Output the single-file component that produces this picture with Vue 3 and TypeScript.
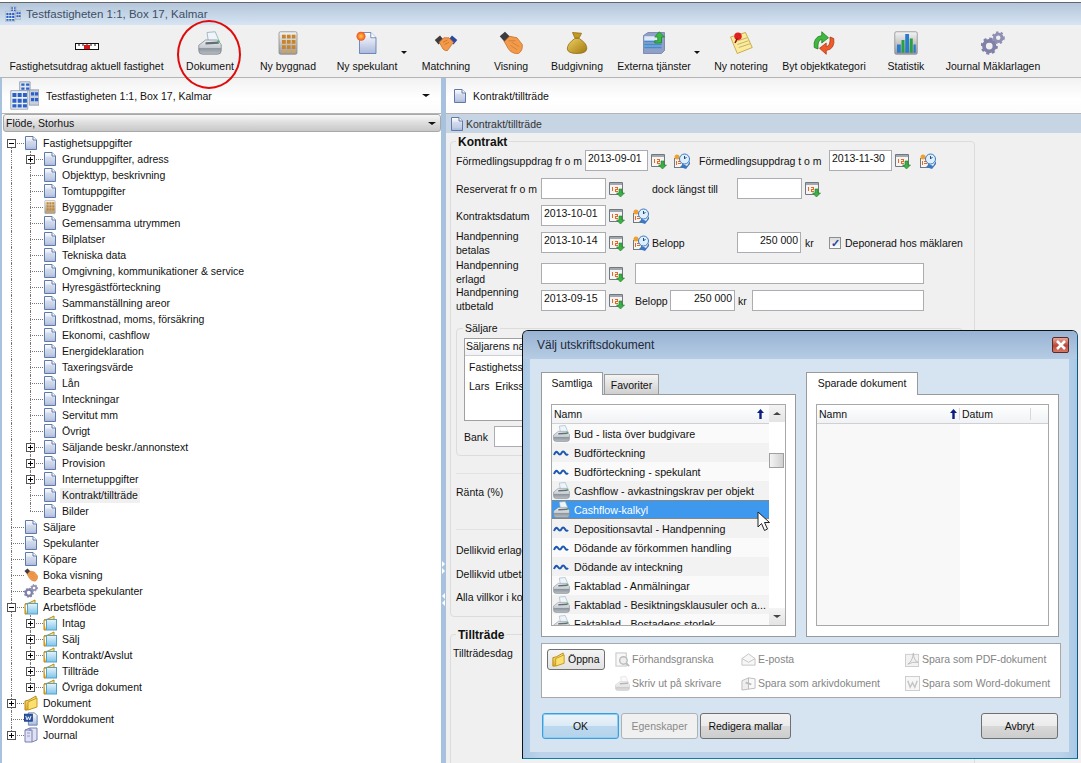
<template>
  <div class="window">
    <!-- ikoner -->
    <svg class="sprite" width="0" height="0">
      <defs>
        <linearGradient id="gDoc" x1="0" y1="0" x2="0" y2="1"><stop offset="0" stop-color="#fff" /><stop offset="1" stop-color="#aab8dc" /></linearGradient>
        <linearGradient id="gGray" x1="0" y1="0" x2="0" y2="1"><stop offset="0" stop-color="#f4f4f4" /><stop offset="1" stop-color="#9a9a9a" /></linearGradient>
        <linearGradient id="gPrint" x1="0" y1="0" x2="0" y2="1"><stop offset="0" stop-color="#eef0f2" /><stop offset=".55" stop-color="#c4cad0" /><stop offset=".6" stop-color="#8f979e" /><stop offset="1" stop-color="#b8bec4" /></linearGradient>
        <linearGradient id="gGold" x1="0" y1="0" x2="1" y2="1"><stop offset="0" stop-color="#f0d060" /><stop offset="1" stop-color="#a07810" /></linearGradient>
        <linearGradient id="gFolder" x1="0" y1="0" x2="0" y2="1"><stop offset="0" stop-color="#fff08a" /><stop offset="1" stop-color="#e0a820" /></linearGradient>
        <linearGradient id="gBlue" x1="0" y1="0" x2="0" y2="1"><stop offset="0" stop-color="#e6f4fc" /><stop offset="1" stop-color="#7fc4ea" /></linearGradient>
        <radialGradient id="gSun"><stop offset="0" stop-color="#ffd040" /><stop offset="1" stop-color="#f05020" /></radialGradient>
      </defs>
      <symbol id="i-doc" viewBox="0 0 12 14">
        <path d="M.5.5H8L11.5 4V13.5H.5Z" fill="url(#gDoc)" stroke="#5f7aa8" />
        <path d="M8 .5V4H11.5" fill="#fff" stroke="#5f7aa8" />
        <path d="M2 6H10M2 8H10M2 10H10" stroke="#c6d0e6" />
      </symbol>
      <symbol id="i-printer" viewBox="0 0 32 32">
        <path d="M12 2L23 1L28 13L14 15Z" fill="#eef6fb" stroke="#8fa6b8" />
        <path d="M1 19L10 12H26L31 18V26Q31 31 26 31H6Q1 31 1 26Z" fill="url(#gPrint)" stroke="#7c868e" />
        <path d="M10 15L27 14L28 17L10 18Z" fill="#626d76" />
        <rect x="26" y="13" width="3" height="2" fill="#30c040" />
      </symbol>
      <symbol id="i-build" viewBox="0 0 32 32">
        <rect x="4" y="1" width="24" height="30" rx="2" fill="url(#gGray)" stroke="#8a8a80" />
        <path d="M8 5h5v5H8zM14.500 5h5v5h-5zM21 5h5v5h-5zM8 12h5v5H8zM14.500 12h5v5h-5zM21 12h5v5h-5zM8 19h5v5H8zM14.500 19h5v5h-5zM21 19h5v5h-5z" fill="#c88428" />
        <path d="M8 26h5v3H8zM14.500 26h5v3h-5zM21 26h5v3h-5z" fill="#d8a050" />
      </symbol>
      <symbol id="i-newdoc" viewBox="0 0 32 32">
        <path d="M6 2H21L28 9V30H6Z" fill="url(#gDoc)" stroke="#4f6fa8" />
        <path d="M21 2V9H28" fill="#fff" stroke="#4f6fa8" />
        <circle cx="8" cy="7" r="6" fill="url(#gSun)" />
      </symbol>
      <symbol id="i-shake" viewBox="0 0 32 32">
        <path d="M1 12L8 6L13 12L6 18Z" fill="#3c3c40" />
        <path d="M31 12L24 6L19 12L26 18Z" fill="#2a4aa0" />
        <path d="M7 15L13 9H20L26 15L18 26Q15 27 12 24Z" fill="#f29a4c" stroke="#c86a20" />
        <path d="M12 15L18 12M14 18L20 15" stroke="#c86a20" />
      </symbol>
      <symbol id="i-hand" viewBox="0 0 32 32">
        <path d="M1 7L8 1L15 8L8 15Z" fill="#3c3c40" />
        <path d="M7 14L14 7L24 9L31 18Q32 26 26 30Q17 31 12 23Z" fill="#f29a4c" stroke="#c86a20" />
        <path d="M17 15L27 21M15 19L24 25M13 13L22 13" stroke="#d07a30" />
      </symbol>
      <symbol id="i-bag" viewBox="0 0 32 32">
        <path d="M10 2L22 3L19 9H13Z" fill="#c89820" stroke="#8a6a10" />
        <path d="M13 10H19Q30 17 29 24Q28 30 16 30Q4 30 3 24Q3 17 13 10Z" fill="url(#gGold)" stroke="#8a6a10" />
      </symbol>
      <symbol id="i-ext" viewBox="0 0 32 32">
        <path d="M2 6L8 2H30V26L26 30H2Z" fill="#8fa0c8" stroke="#6a7aa0" />
        <path d="M3 7H25V13H3Z" fill="#dfe8f6" />
        <path d="M3 14H26M3 18H26M3 22H26" stroke="#3c8ed0" stroke-width="2" />
        <path d="M17 13H21V8H17L23 1L30 8H26V16H17Z" fill="#3cb848" stroke="#1e8028" />
      </symbol>
      <symbol id="i-note" viewBox="0 0 32 32">
        <path d="M2 8L22 2L31 22L11 30Z" fill="#fbeb9a" stroke="#b89a30" />
        <path d="M9 14L24 9M11 18L26 13M13 22L28 17" stroke="#b0a060" />
        <circle cx="12" cy="7" r="5" fill="#e02020" />
        <path d="M11 10L8 16" stroke="#901010" stroke-width="2" />
      </symbol>
      <symbol id="i-swap" viewBox="0 0 32 32">
        <path d="M3 22Q1 8 13 6V1L22 9L13 16V11Q7 12 8 24Z" fill="#40b840" stroke="#1c7c1c" />
        <path d="M29 10Q31 24 19 26V31L10 23L19 16V21Q25 20 24 8Z" fill="#ee5a28" stroke="#b03010" />
      </symbol>
      <symbol id="i-chart" viewBox="0 0 32 32">
        <rect x="1" y="1" width="30" height="30" rx="2" fill="url(#gGray)" stroke="#8a8a90" />
        <rect x="4" y="18" width="5" height="11" fill="#2a7ad0" />
        <rect x="10" y="12" width="4" height="17" fill="#2aa040" />
        <rect x="15" y="4" width="5" height="25" fill="#2a7ad0" />
        <rect x="21" y="10" width="4" height="19" fill="#2aa040" />
        <rect x="26" y="18" width="3" height="11" fill="#2a7ad0" />
      </symbol>
      <symbol id="i-gears" viewBox="0 0 32 32">
        <circle cx="11" cy="20" r="7" fill="none" stroke="#8080a8" stroke-width="5" />
        <circle cx="11" cy="20" r="10" fill="none" stroke="#8080a8" stroke-width="3" stroke-dasharray="4 3.8" />
        <circle cx="23" cy="9" r="5" fill="none" stroke="#9090b4" stroke-width="4" />
        <circle cx="23" cy="9" r="7.5" fill="none" stroke="#9090b4" stroke-width="2.5" stroke-dasharray="3 3.3" />
      </symbol>
      <symbol id="i-towers" viewBox="0 0 36 36">
        <path d="M12 1H25V12H12Z" fill="#dfe5ee" stroke="#8a96a8" />
        <path d="M14 3h4v3h-4zM20 3h4v3h-4zM14 8h4v3h-4zM20 8h4v3h-4z" fill="#2a60c8" />
        <path d="M24 11H36V30H24Z" fill="#c8d0dc" stroke="#8a96a8" />
        <path d="M26 14h4v4h-4zM31 14h4v4h-4zM26 21h4v4h-4zM31 21h4v4h-4z" fill="#2a60c8" />
        <path d="M1 12H22V35L12 35H1Z" fill="#eef1f5" stroke="#8a96a8" />
        <path d="M3 15h5v5H3zM9.500 15h5v5h-5zM16 15h5v5h-5zM3 22h5v5H3zM9.500 22h5v5h-5zM16 22h5v5h-5zM3 29h5v4H3zM9.500 29h5v4h-5zM16 29h5v4h-5z" fill="#2a60c8" />
      </symbol>
      <symbol id="i-folder" viewBox="0 0 14 16">
        <path d="M1 6L5 5L12 1V11L3 15H1Z" fill="url(#gFolder)" stroke="#b88a18" />
        <path d="M4 7L13 3V12L4 15Z" fill="#fbe070" stroke="#c89820" />
      </symbol>
      <symbol id="i-bfolder" viewBox="0 0 14 16">
        <path d="M1 5L5 4L11 1V5H1V15H3" fill="url(#gFolder)" stroke="#b88a18" />
        <rect x="3.5" y="4.5" width="10" height="10.500" fill="url(#gBlue)" stroke="#58a0c8" />
      </symbol>
      <symbol id="i-word" viewBox="0 0 16 16">
        <path d="M5 1H12L15 4V15H5Z" fill="url(#gDoc)" stroke="#5f7aa8" />
        <rect x="0.500" y="2.500" width="9" height="8" fill="#2a55a8" stroke="#183a80" />
        <path d="M2 4.500L3.500 9L5 5.500L6.500 9L8 4.500" fill="none" stroke="#fff" />
      </symbol>
      <symbol id="i-journal" viewBox="0 0 14 16">
        <path d="M1 3L6 1H13V13L8 15H1Z" fill="#dfe2f4" stroke="#7a80b0" />
        <path d="M6 1V4M1 3H8V15" fill="none" stroke="#7a80b0" />
        <path d="M3 6h3M3 9h3" stroke="#9a9aba" />
      </symbol>
      <symbol id="i-cal" viewBox="0 0 16 16">
        <path d="M.5 1.500H13.500V13.500H.5Z" fill="#f4f4f4" stroke="#707880" />
        <rect x="1" y="2" width="12" height="2" fill="#a0a8b0" />
        <path d="M3 6h1v4H3zM6 6h3v1H6zM8 7h1v1H8zM6 8h3v1H6zM6 9h1v1H6zM6 10h3v1H6z" fill="#e86820" />
        <path d="M10 8h3v4h2.500L11.500 16L7.500 12H10Z" fill="#3cb040" stroke="#1e7c28" stroke-width=".6" />
      </symbol>
      <symbol id="i-calclock" viewBox="0 0 16 16">
        <rect x=".5" y="5.500" width="8" height="9" fill="#f4f4f4" stroke="#707880" />
        <circle cx="3" cy="4" r="2.500" fill="#f0a030" />
        <path d="M2 8h1v4H2zM4 8h3v1H4zM4 10h3v1H4z" fill="#e86820" />
        <circle cx="10.500" cy="6" r="5" fill="#dcefff" stroke="#3c78c0" />
        <path d="M10.500 3V6L12.500 4" fill="none" stroke="#304870" />
        <path d="M6 14L9 11L13 13L16 8V11L12 16Z" fill="#3c78c0" />
      </symbol>
      <symbol id="i-wave" viewBox="0 0 16 8">
        <path d="M1 6Q3 1 5 4Q7 7 8.500 4Q10 1 12 4Q13.500 7 15 5" fill="none" stroke="#1c58b0" stroke-width="2" />
      </symbol>
      <symbol id="i-sort" viewBox="0 0 7 10">
        <path d="M3.500 0L7 4H4.700V10H2.300V4H0Z" fill="#0c1e80" />
      </symbol>
      <symbol id="i-preview" viewBox="0 0 16 16">
        <rect x="1" y="1" width="11" height="14" fill="#f0f0f0" stroke="#888" />
        <circle cx="9" cy="9" r="4" fill="#ddd" stroke="#777" stroke-width="1.500" />
        <path d="M12 12L15 15" stroke="#777" stroke-width="2" />
      </symbol>
      <symbol id="i-mail" viewBox="0 0 16 16">
        <path d="M1 7L8 2L15 7V14H1Z" fill="#eee" stroke="#888" />
        <path d="M1 7L8 11L15 7" fill="none" stroke="#888" />
      </symbol>
      <symbol id="i-archive" viewBox="0 0 16 16">
        <path d="M1 5L8 2V14L1 15Z" fill="#ddd" stroke="#777" />
        <path d="M8 2L15 3V13L8 14Z" fill="#f2f2f2" stroke="#777" />
        <path d="M5 7L11 9" stroke="#777" stroke-width="2" />
      </symbol>
      <symbol id="i-pdf" viewBox="0 0 16 16">
        <rect x=".5" y="2.500" width="14" height="13" fill="#e4e4e4" stroke="#999" />
        <path d="M3 13Q8 10 9 1Q9 9 14 11Q8 10 3 13Z" fill="none" stroke="#777" />
      </symbol>
      <symbol id="i-wdoc" viewBox="0 0 16 16">
        <rect x=".5" y=".5" width="15" height="15" fill="#eee" stroke="#999" />
        <path d="M3 5L5.500 12L8 7L10.500 12L13 5" fill="none" stroke="#888" stroke-width="1.500" />
      </symbol>
    </svg>

    <div class="titlebar">
      <svg class="title-icon"><use href="#i-towers" /></svg>
      <span>Testfastigheten 1:1, Box 17, Kalmar</span>
    </div>

    <div class="toolbar">
      <div v-for="tool in tools" :key="tool.label" class="tool">
        <div class="tool-icon">
          <svg v-if="tool.icon" class="tool-svg"><use :href="'#' + tool.icon" /></svg>
          <svg v-else class="ruler" viewBox="0 0 24 8">
            <rect x=".5" y="1.500" width="23" height="6" fill="#fff" stroke="#111" />
            <rect x="9" y="3" width="6" height="4" fill="#e01010" />
            <path d="M4 1V4M8 1V4M12 1V3M16 1V4M20 1V4" stroke="#111" />
          </svg>
          <span v-if="tool.menu" class="tool-arrow" :class="tool.menu"></span>
        </div>
        <span class="tool-label">{{ tool.label }}</span>
      </div>
    </div>

    <div class="workspace">
      <div class="edge"></div>
      <div class="left">
        <div class="left-head">
          <svg class="towers"><use href="#i-towers" /></svg>
          <span class="grow">Testfastigheten 1:1, Box 17, Kalmar</span>
          <span class="caret"></span>
        </div>
        <div class="combo">
          <span class="grow">Flöde, Storhus</span>
          <span class="caret"></span>
        </div>
        <div class="tree">
          <div v-for="(row, i) in tree" :key="row.label" class="tree-row" :class="'lvl' + row.level">
            <span v-if="i < tree.length - 1" class="v0" :class="{ first: i === 0 }"></span>
            <span v-else class="v0 last"></span>
            <span v-if="row.level === 1" class="v1" :class="{ last: row.end }"></span>
            <span class="hz"></span>
            <span v-if="row.exp" class="exp">
              <i class="bar"></i><i v-if="row.exp === '+'" class="bar up"></i>
            </span>
            <svg class="tree-icon" :class="{ tall: row.icon }"><use :href="'#' + (row.icon ?? 'i-doc')" /></svg>
            <span class="tree-label" :class="{ current: row.label === 'Kontrakt/tillträde' }">{{ row.label }}</span>
          </div>
        </div>
      </div>

      <div class="splitter">
        <div class="grip"><i class="tri-r"></i><i class="tri-r"></i></div>
        <div class="grip"><i class="tri-l"></i><i class="tri-l"></i></div>
      </div>

      <div class="right">
        <div class="right-head">
          <svg class="doc-head"><use href="#i-doc" /></svg>
          <span>Kontrakt/tillträde</span>
        </div>
        <div class="subhead">
          <svg class="doc-head"><use href="#i-doc" /></svg>
          <span>Kontrakt/tillträde</span>
        </div>

        <div class="form">
          <div class="group contract">
            <span class="legend strong">Kontrakt</span>
            <div class="form-rows">
              <div class="row r1">
                <span>Förmedlingsuppdrag fr o m</span>
                <span class="input">2013-09-01</span>
                <svg class="mini"><use href="#i-cal" /></svg>
                <svg class="mini flush"><use href="#i-calclock" /></svg>
                <span>Förmedlingsuppdrag t o m</span>
                <span class="input">2013-11-30</span>
                <svg class="mini"><use href="#i-cal" /></svg>
                <svg class="mini flush"><use href="#i-calclock" /></svg>
              </div>
              <div class="row r2">
                <span>Reserverat fr o m</span>
                <span class="input"></span>
                <svg class="mini"><use href="#i-cal" /></svg>
                <span>dock längst till</span>
                <span class="input"></span>
                <svg class="mini"><use href="#i-cal" /></svg>
              </div>
              <div class="row r3">
                <span>Kontraktsdatum</span>
                <span class="input">2013-10-01</span>
                <svg class="mini"><use href="#i-cal" /></svg>
                <svg class="mini flush"><use href="#i-calclock" /></svg>
              </div>
              <div class="row r4">
                <span class="two">Handpenning<br />betalas</span>
                <span class="input">2013-10-14</span>
                <svg class="mini"><use href="#i-cal" /></svg>
                <svg class="mini flush"><use href="#i-calclock" /></svg>
                <span>Belopp</span>
                <span class="input num">250 000</span>
                <span class="kr">kr</span>
                <span class="check-wrap"><span class="check">✓</span>Deponerad hos mäklaren</span>
              </div>
              <div class="row r5">
                <span class="two">Handpenning<br />erlagd</span>
                <span class="input"></span>
                <svg class="mini"><use href="#i-cal" /></svg>
                <span class="input"></span>
              </div>
              <div class="row r6">
                <span class="two">Handpenning<br />utbetald</span>
                <span class="input">2013-09-15</span>
                <svg class="mini"><use href="#i-cal" /></svg>
                <span>Belopp</span>
                <span class="input num">250 000</span>
                <span class="kr-near">kr</span>
                <span class="input"></span>
              </div>
            </div>

            <div class="group sellers">
              <span class="legend">Säljare</span>
              <div class="seller-table">
                <div class="seller-head">Säljarens namn</div>
                <div class="seller-row">Fastighetsservice AB</div>
                <div class="seller-row">Lars&nbsp; Eriksson</div>
              </div>
              <div class="bank">
                <span class="bank-label">Bank</span>
                <span class="input bank-input"></span>
              </div>
            </div>

            <div class="rule rule-a"></div>
            <div class="plain ranta">Ränta (%)</div>
            <div class="rule rule-b"></div>
            <div class="plain d1">Dellikvid erlagd</div>
            <div class="plain d2">Dellikvid utbetald</div>
            <div class="plain d3">Alla villkor i kontraktet uppfyllda</div>
          </div>

          <div class="group access">
            <span class="legend strong">Tillträde</span>
            <div class="access-row">Tillträdesdag</div>
          </div>
        </div>
      </div>
    </div>

    <!-- utskriftsdialog -->
    <div class="dialog">
      <div class="dialog-title">
        <span class="grow">Välj utskriftsdokument</span>
        <span class="close">
          <svg viewBox="0 0 12 12" width="12" height="12"><path d="M2 2L10 10M10 2L2 10" stroke="#fff" stroke-width="2.500" /></svg>
        </span>
      </div>
      <div class="dialog-body">
        <div class="panes">
          <div class="pane">
            <div class="tabs">
              <span class="tab active t-all">Samtliga</span>
              <span class="tab t-fav">Favoriter</span>
            </div>
            <div class="pane-box">
              <div class="doc-list">
                <div class="list-main">
                  <div class="list-head">
                    <span class="grow">Namn</span>
                    <svg class="sort"><use href="#i-sort" /></svg>
                  </div>
                  <div class="list-rows">
                    <div v-for="(doc, i) in documents" :key="doc.name" class="doc-row" :class="{ odd: i % 2 === 1, selected: doc.name === 'Cashflow-kalkyl' }">
                      <svg v-if="doc.wave" class="wave"><use href="#i-wave" /></svg>
                      <svg v-else class="row-printer"><use href="#i-printer" /></svg>
                      <span>{{ doc.name }}</span>
                    </div>
                  </div>
                </div>
                <div class="scroll">
                  <span class="scroll-btn"><i class="tri up"></i></span>
                  <span class="thumb"></span>
                  <span class="scroll-btn bottom"><i class="tri"></i></span>
                </div>
              </div>
            </div>
          </div>

          <div class="pane narrow">
            <div class="tabs">
              <span class="tab active t-saved">Sparade dokument</span>
            </div>
            <div class="pane-box">
              <div class="saved-list">
                <div class="saved-head">
                  <span class="col-name"><span class="grow">Namn</span><svg class="sort"><use href="#i-sort" /></svg></span>
                  <span class="col-date">Datum</span>
                  <span class="col-rest"></span>
                </div>
                <div class="saved-body"><span class="col-fill"></span></div>
              </div>
            </div>
          </div>
        </div>

        <div class="actions">
          <span class="open-btn"><svg class="act-icon"><use href="#i-folder" /></svg>Öppna</span>
          <span v-for="a in actions" :key="a.label" class="action">
            <svg class="act-icon dim"><use :href="'#' + a.icon" /></svg>{{ a.label }}
          </span>
        </div>

        <div class="buttons">
          <span class="btn ok">OK</span>
          <span class="btn off">Egenskaper</span>
          <span class="btn edit">Redigera mallar</span>
          <span class="btn cancel">Avbryt</span>
        </div>
      </div>
    </div>

    <svg class="cursor" viewBox="0 0 14 21" width="14" height="21">
      <path d="M1 1V16L4.500 12.500L7.500 19.500L10.500 18L7.500 11.500H12.500Z" fill="#fff" stroke="#222" />
    </svg>
    <div class="ring"></div>
  </div>
</template>

<script setup lang="ts">
interface Tool { label: string; icon?: string; menu?: string }
interface TreeRow { label: string; level: number; exp?: string; icon?: string; end?: boolean }
interface DocRow { name: string; wave?: boolean }

const tools: Tool[] = [
  { label: 'Fastighetsutdrag aktuell fastighet' },
  { label: 'Dokument', icon: 'i-printer' },
  { label: 'Ny byggnad', icon: 'i-build' },
  { label: 'Ny spekulant', icon: 'i-newdoc', menu: 'near' },
  { label: 'Matchning', icon: 'i-shake' },
  { label: 'Visning', icon: 'i-hand' },
  { label: 'Budgivning', icon: 'i-bag' },
  { label: 'Externa tjänster', icon: 'i-ext', menu: 'far' },
  { label: 'Ny notering', icon: 'i-note' },
  { label: 'Byt objektkategori', icon: 'i-swap' },
  { label: 'Statistik', icon: 'i-chart' },
  { label: 'Journal Mäklarlagen', icon: 'i-gears' },
]

const tree: TreeRow[] = [
  { label: 'Fastighetsuppgifter', level: 0, exp: '-' },
  { label: 'Grunduppgifter, adress', level: 1, exp: '+' },
  { label: 'Objekttyp, beskrivning', level: 1 },
  { label: 'Tomtuppgifter', level: 1 },
  { label: 'Byggnader', level: 1, icon: 'i-build' },
  { label: 'Gemensamma utrymmen', level: 1 },
  { label: 'Bilplatser', level: 1 },
  { label: 'Tekniska data', level: 1 },
  { label: 'Omgivning, kommunikationer & service', level: 1 },
  { label: 'Hyresgästförteckning', level: 1 },
  { label: 'Sammanställning areor', level: 1 },
  { label: 'Driftkostnad, moms, försäkring', level: 1 },
  { label: 'Ekonomi, cashflow', level: 1 },
  { label: 'Energideklaration', level: 1 },
  { label: 'Taxeringsvärde', level: 1 },
  { label: 'Lån', level: 1 },
  { label: 'Inteckningar', level: 1 },
  { label: 'Servitut mm', level: 1 },
  { label: 'Övrigt', level: 1 },
  { label: 'Säljande beskr./annonstext', level: 1, exp: '+' },
  { label: 'Provision', level: 1, exp: '+' },
  { label: 'Internetuppgifter', level: 1, exp: '+' },
  { label: 'Kontrakt/tillträde', level: 1 },
  { label: 'Bilder', level: 1, end: true },
  { label: 'Säljare', level: 0 },
  { label: 'Spekulanter', level: 0 },
  { label: 'Köpare', level: 0 },
  { label: 'Boka visning', level: 0, icon: 'i-hand' },
  { label: 'Bearbeta spekulanter', level: 0, icon: 'i-gears' },
  { label: 'Arbetsflöde', level: 0, exp: '-', icon: 'i-bfolder' },
  { label: 'Intag', level: 1, exp: '+', icon: 'i-bfolder' },
  { label: 'Sälj', level: 1, exp: '+', icon: 'i-bfolder' },
  { label: 'Kontrakt/Avslut', level: 1, exp: '+', icon: 'i-bfolder' },
  { label: 'Tillträde', level: 1, exp: '+', icon: 'i-bfolder' },
  { label: 'Övriga dokument', level: 1, exp: '+', icon: 'i-bfolder', end: true },
  { label: 'Dokument', level: 0, exp: '+', icon: 'i-folder' },
  { label: 'Worddokument', level: 0, icon: 'i-word' },
  { label: 'Journal', level: 0, exp: '+', icon: 'i-journal' },
]

const documents: DocRow[] = [
  { name: 'Bud - lista över budgivare' },
  { name: 'Budförteckning', wave: true },
  { name: 'Budförteckning - spekulant', wave: true },
  { name: 'Cashflow - avkastningskrav per objekt' },
  { name: 'Cashflow-kalkyl' },
  { name: 'Depositionsavtal - Handpenning', wave: true },
  { name: 'Dödande av förkommen handling', wave: true },
  { name: 'Dödande av inteckning', wave: true },
  { name: 'Faktablad - Anmälningar' },
  { name: 'Faktablad - Besiktningsklausuler och a...' },
  { name: 'Faktablad - Bostadens storlek' },
]

const actions = [
  { label: 'Förhandsgranska', icon: 'i-preview' },
  { label: 'E-posta', icon: 'i-mail' },
  { label: 'Spara som PDF-dokument', icon: 'i-pdf' },
  { label: 'Skriv ut på skrivare', icon: 'i-printer' },
  { label: 'Spara som arkivdokument', icon: 'i-archive' },
  { label: 'Spara som Word-dokument', icon: 'i-wdoc' },
]
</script>

<style>
html,
body {
  margin: 0;
  background: #fff;
}
</style>

<style scoped>
.window {
  position: relative;
  width: 1081px;
  height: 763px;
  overflow: hidden;
  display: flex;
  flex-direction: column;
  background: #fff;
  font-family: "Liberation Sans", Arial, sans-serif;
  font-size: 10.5px;
  color: #111;
}

.sprite {
  position: absolute;
}

.grow {
  flex: 1;
}

/* titelrad */
.titlebar {
  box-sizing: border-box;
  margin-top: 2px;
  height: 23px;
  display: flex;
  align-items: center;
  gap: 5px;
  padding-left: 5px;
  border-top: 1px solid #666;
  background: linear-gradient(#b4c6da, #d6e4f3);
  font-size: 11.5px;
  color: #3d4f66;
}

.title-icon {
  width: 16px;
  height: 16px;
}

/* verktygsrad */
.toolbar {
  box-sizing: border-box;
  height: 53px;
  display: grid;
  grid-template-columns: 169px 78px 78px 80px 78px 52px 80px 74px 100px 66px 98px 76px;
  padding-left: 2px;
  background: #f0f0f0;
  border-bottom: 1px solid #b4b4b4;
}

.tool {
  display: flex;
  flex-direction: column;
  align-items: center;
  white-space: nowrap;
}

.tool-icon {
  position: relative;
  width: 26px;
  height: 26px;
  margin-top: 5px;
  display: flex;
  align-items: center;
  justify-content: center;
}

.tool-svg {
  width: 24px;
  height: 24px;
  flex: none;
}

.ruler {
  width: 24px;
  height: 8px;
  flex: none;
  margin-top: 5px;
}

.tool-arrow {
  position: absolute;
  top: 21px;
  width: 0;
  height: 0;
  border-left: 3.5px solid transparent;
  border-right: 3.5px solid transparent;
  border-top: 3px solid #111;
}

.tool-arrow.near {
  left: 47px;
}

.tool-arrow.far {
  left: 53px;
}

.tool-label {
  margin-top: 3px;
  line-height: 14px;
}

/* arbetsyta */
.workspace {
  flex: 1;
  min-height: 0;
  display: flex;
}

.edge {
  width: 2px;
  background: #a8c2de;
}

.left {
  width: 439px;
  display: flex;
  flex-direction: column;
}

.left-head {
  height: 35px;
  display: flex;
  align-items: center;
  padding: 0 11px 0 8px;
  background: linear-gradient(#f2f2f2, #fff 60%, #fcfcfc);
  border-bottom: 1px solid #b4b4b4;
}

.towers {
  width: 29px;
  height: 31px;
  margin-right: 7px;
}

.caret {
  width: 0;
  height: 0;
  margin-top: 3px;
  border: 3px solid transparent;
  border-top: 3px solid #111;
  border-left-width: 4px;
  border-right-width: 4px;
}

.combo {
  box-sizing: border-box;
  height: 18px;
  margin-left: 1px;
  display: flex;
  align-items: center;
  padding: 0 4px 0 2px;
  border: 1px solid #a8a8a8;
  border-radius: 3px;
  background: linear-gradient(#f8f8f8, #ddd 50%, #c8c8c8);
}

.tree {
  flex: 1;
  overflow: hidden;
  padding-top: 3px;
  background: #fff;
}

.tree-row {
  position: relative;
  height: 16px;
  display: flex;
  align-items: center;
  white-space: nowrap;
}

.tree-row.lvl0 {
  padding-left: 22px;
}

.tree-row.lvl1 {
  padding-left: 41px;
}

.v0,
.v1 {
  position: absolute;
  top: 0;
  bottom: 0;
  border-left: 1px dotted #777;
}

.v0 {
  left: 9px;
}

.v1 {
  left: 28px;
}

.v0.first {
  top: 8px;
}

.v0.last,
.v1.last {
  bottom: 8px;
}

.hz {
  position: absolute;
  top: 8px;
  width: 13px;
  border-top: 1px dotted #777;
}

.lvl0 .hz {
  left: 9px;
}

.lvl1 .hz {
  left: 28px;
}

.exp {
  position: absolute;
  top: 4px;
  width: 9px;
  height: 9px;
  box-sizing: border-box;
  border: 1px solid #555;
  background: #fff;
}

.lvl0 .exp {
  left: 5px;
}

.lvl1 .exp {
  left: 24px;
}

.bar {
  position: absolute;
  left: 1px;
  top: 3px;
  width: 5px;
  height: 1px;
  background: #000;
}

.bar.up {
  left: 3px;
  top: 1px;
  width: 1px;
  height: 5px;
}

.tree-icon {
  position: relative;
  width: 14px;
  height: 14px;
  flex: none;
}

.tree-icon.tall {
  height: 16px;
}

.tree-label {
  position: relative;
  margin-left: 3px;
  padding: 0 2px;
  line-height: 15px;
}

.tree-label.current {
  background: #f0f0f0;
}

.splitter {
  width: 5px;
  box-sizing: border-box;
  display: flex;
  flex-direction: column;
  align-items: center;
  padding-top: 483px;
  gap: 19px;
  background: #a8c2de;
}

.grip {
  display: flex;
  flex-direction: column;
  gap: 1px;
}

.tri-r,
.tri-l {
  display: block;
  width: 0;
  height: 0;
  border-top: 3px solid transparent;
  border-bottom: 3px solid transparent;
}

.tri-r {
  border-left: 3px solid #fff;
}

.tri-l {
  border-right: 3px solid #fff;
}

.right {
  flex: 1;
  min-width: 0;
  display: flex;
  flex-direction: column;
  background: #f0f0f0;
}

.right-head {
  height: 35px;
  display: flex;
  align-items: center;
  gap: 7px;
  padding-left: 8px;
  background: linear-gradient(#f2f2f2, #fff 60%, #fcfcfc);
  border-bottom: 1px solid #b4b4b4;
}

.doc-head {
  width: 12px;
  height: 14px;
}

.subhead {
  height: 19px;
  display: flex;
  align-items: center;
  gap: 3px;
  padding-left: 5px;
  background: #c6d4e3;
  color: #333;
}

/* formulär */
.form {
  flex: 1;
  min-height: 0;
  padding: 8px 0 0 4px;
}

.group {
  position: relative;
  box-sizing: border-box;
  border: 1px solid #dcdcdc;
  border-radius: 4px;
}

.legend {
  position: absolute;
  left: 6px;
  top: -8px;
  padding: 0 2px;
  line-height: 14px;
  background: #f0f0f0;
}

.legend.strong {
  left: 5px;
  top: -7px;
  font-weight: bold;
  font-size: 12px;
}

.contract {
  width: 525px;
  height: 476px;
  padding: 8px 0 0 5px;
}

.form-rows {
  display: flex;
  flex-direction: column;
  gap: 6px;
}

.row {
  display: grid;
  height: 21px;
  grid-template-rows: 21px;
  align-items: center;
  white-space: nowrap;
}

.r1 {
  grid-template-columns: 129px 63px 26px 25px 130px 63px 28px 20px;
}

.r2 {
  margin-top: 1px;
  grid-template-columns: 85px 65px 46px 85px 65px 20px;
}

.r3 {
  grid-template-columns: 85px 65px 27px 20px;
}

.r4 {
  grid-template-columns: 85px 65px 27px 19px 85px 64px 28px 140px;
}

.r5 {
  margin-top: 4px;
  grid-template-columns: 85px 65px 29px 289px;
}

.r6 {
  grid-template-columns: 85px 65px 29px 35px 65px 17px 172px;
}

.two {
  line-height: 14px;
}

.r5 .two,
.r6 .two {
  margin-top: -3px;
}

.input {
  box-sizing: border-box;
  height: 21px;
  padding-left: 2px;
  line-height: 15px;
  background: #fff;
  border: 1px solid #abadb3;
}

.input.num {
  padding: 0 2px 0 0;
  text-align: right;
}

.mini {
  width: 16px;
  height: 16px;
  margin-left: 3px;
}

.mini.flush {
  margin-left: 0;
}

.kr {
  padding-left: 4px;
}

.kr-near {
  padding-left: 3px;
}

.check-wrap {
  display: flex;
  align-items: center;
  gap: 4px;
}

.check {
  width: 12px;
  height: 12px;
  box-sizing: border-box;
  border: 1px solid #8e8f8f;
  background: linear-gradient(#dcdcdc, #fff);
  color: #2a4a9a;
  font-size: 11px;
  font-weight: bold;
  line-height: 10px;
  text-align: center;
}

.sellers {
  width: 507px;
  height: 128px;
  margin-top: 17px;
  padding: 9px 0 0 7px;
}

.seller-table {
  box-sizing: border-box;
  width: 491px;
  height: 83px;
  border: 1px solid #a0a0a0;
  background: #fff;
  white-space: nowrap;
}

.seller-head {
  height: 16px;
  padding-left: 1px;
  line-height: 15px;
  background: linear-gradient(#fff, #f0f2f5);
  border-bottom: 1px solid #d0d0d0;
}

.seller-row {
  height: 19px;
  padding-left: 4px;
  line-height: 19px;
}

.seller-row:nth-child(2) {
  margin-top: 2px;
}

.bank {
  margin-top: 5px;
  display: flex;
  align-items: center;
}

.bank-label {
  width: 30px;
}

.bank-input {
  width: 200px;
}

.rule {
  position: absolute;
  left: 5px;
  right: 5px;
  border-top: 1px solid #e2e2e2;
}

.rule-a {
  top: 331px;
}

.rule-b {
  top: 387px;
}

.plain {
  position: absolute;
  left: 5px;
  line-height: 14px;
  white-space: nowrap;
}

.ranta {
  top: 343px;
}

.d1 {
  top: 401px;
}

.d2 {
  top: 425px;
}

.d3 {
  top: 448px;
}

.access {
  width: 525px;
  height: 160px;
  margin-top: 17px;
  padding: 12px 0 0 2px;
}

/* dialog */
.dialog {
  position: absolute;
  left: 522px;
  top: 330px;
  width: 556px;
  height: 429px;
  box-sizing: border-box;
  display: flex;
  flex-direction: column;
  border: 1px solid #111;
  border-bottom-color: #0a7ea8;
  border-right-color: #0a5a80;
  border-radius: 6px 6px 0 0;
  background: linear-gradient(90deg, #a9c8e6, #bcd3ea 3%, #bcd3ea 97%, #a9c8e6);
}

.dialog-title {
  height: 28px;
  display: flex;
  align-items: center;
  padding: 0 8px 0 14px;
  background: linear-gradient(#98b3d3, #b6cce4);
  color: #222a3a;
  font-size: 12px;
  border-radius: 5px 5px 0 0;
}

.close {
  width: 17px;
  height: 16px;
  box-sizing: border-box;
  display: flex;
  align-items: center;
  justify-content: center;
  border: 1px solid #5a2a2a;
  border-radius: 2px;
  background: linear-gradient(#e8a898, #b84838 55%, #d87868);
}

.dialog-body {
  flex: 1;
  margin: 0 8px 6px 7px;
  padding: 13px 0 0 11px;
  background: #d6e3f1;
}

.panes {
  display: flex;
  gap: 10px;
}

.pane {
  width: 255px;
}

.pane.narrow {
  width: 253px;
}

.tabs {
  height: 22px;
  display: flex;
  align-items: flex-end;
}

.tab {
  box-sizing: border-box;
  height: 20px;
  margin-left: 1px;
  display: flex;
  align-items: center;
  justify-content: center;
  border: 1px solid #9a9a9a;
  border-bottom: none;
  background: linear-gradient(#f4f4f4, #cfcfcf);
}

.tab.active {
  height: 23px;
  margin: 0 0 -1px;
  padding-bottom: 3px;
  background: #fff;
  position: relative;
  z-index: 1;
}

.t-all {
  width: 62px;
}

.t-fav {
  width: 55px;
}

.t-saved {
  width: 112px;
}

.pane-box {
  box-sizing: border-box;
  height: 243px;
  padding: 9px 9px 0;
  background: #fff;
  border: 1px solid #9a9a9a;
}

.doc-list {
  height: 222px;
  box-sizing: border-box;
  display: flex;
  border: 1px solid #a8a8a8;
  overflow: hidden;
  font-size: 10.7px;
}

.list-main {
  flex: 1;
  min-width: 0;
}

.list-head {
  height: 18px;
  display: flex;
  align-items: center;
  padding: 0 5px 0 2px;
  background: linear-gradient(#fff, #f0f2f5);
  border-bottom: 1px solid #d0d0d0;
  font-size: 10.5px;
}

.sort {
  width: 7px;
  height: 10px;
  flex: none;
}

.doc-row {
  height: 19px;
  display: flex;
  align-items: center;
  padding-left: 1px;
  white-space: nowrap;
  background: #fafafa;
}

.doc-row.odd {
  background: #f2f2f2;
}

.doc-row.selected {
  box-sizing: border-box;
  color: #fff;
  background: #3d98ee;
  border-top: 1px dotted #c87820;
  border-bottom: 1px dotted #c87820;
}

.wave {
  width: 16px;
  height: 8px;
  margin-right: 5px;
  flex: none;
}

.row-printer {
  width: 17px;
  height: 17px;
  margin-right: 4px;
  flex: none;
}

.scroll {
  position: relative;
  width: 16px;
  flex: none;
  background: #fff;
}

.scroll-btn {
  position: absolute;
  left: 0;
  top: 0;
  width: 16px;
  height: 17px;
  display: flex;
  align-items: center;
  justify-content: center;
  background: linear-gradient(#f4f4f4, #e4e4e4);
}

.scroll-btn.bottom {
  top: auto;
  bottom: 0;
}

.tri {
  border: 3px solid transparent;
  border-top: 3px solid #444;
  border-left-width: 4px;
  border-right-width: 4px;
  margin-top: 3px;
}

.tri.up {
  border-top-color: transparent;
  border-bottom: 3px solid #444;
  margin: -3px 0 0;
}

.thumb {
  position: absolute;
  top: 48px;
  left: 0;
  width: 15px;
  height: 15px;
  box-sizing: border-box;
  border: 1px solid #a0a0a0;
  background: linear-gradient(90deg, #f4f4f4, #d0d0d0);
}

.saved-list {
  height: 222px;
  box-sizing: border-box;
  display: flex;
  flex-direction: column;
  border: 1px solid #a8a8a8;
}

.saved-head {
  height: 18px;
  display: flex;
  align-items: center;
  background: linear-gradient(#fff, #f0f2f5);
  border-bottom: 1px solid #d0d0d0;
}

.col-name {
  width: 143px;
  box-sizing: border-box;
  display: flex;
  align-items: center;
  padding: 0 2px 0 2px;
  border-right: 1px solid #d8d8d8;
}

.col-date {
  width: 71px;
  padding-left: 2px;
  box-sizing: border-box;
  border-right: 1px solid #d8d8d8;
}

.saved-body {
  flex: 1;
  background: #fff;
}

.col-fill {
  display: block;
  width: 143px;
  height: 100%;
  background: #f8f8f8;
}

.actions {
  box-sizing: border-box;
  width: 520px;
  height: 55px;
  margin-top: 6px;
  padding: 3px 0 0 5px;
  display: grid;
  grid-template-columns: 68px 126px 164px 1fr;
  grid-template-rows: 24px 24px;
  align-items: center;
  background: #fff;
  border: 1px solid #a8a8a8;
  white-space: nowrap;
}

.open-btn {
  grid-row: 1;
  width: 58px;
  height: 21px;
  box-sizing: border-box;
  display: flex;
  align-items: center;
  gap: 2px;
  padding-left: 3px;
  border: 1px solid #707070;
  border-radius: 3px;
  background: linear-gradient(#f4f4f4, #e2e2e2);
}

.action {
  display: flex;
  align-items: center;
  gap: 2px;
  color: #858585;
}

.action:nth-child(5) {
  grid-column: 2;
}

.act-icon {
  width: 15px;
  height: 15px;
  flex: none;
}

.dim {
  filter: grayscale(1) opacity(0.5);
}

.buttons {
  width: 516px;
  margin: 15px 0 0 1px;
  display: flex;
  gap: 2px;
}

.btn {
  box-sizing: border-box;
  height: 26px;
  display: flex;
  align-items: center;
  justify-content: center;
  border: 1px solid #707070;
  border-radius: 3px;
  background: linear-gradient(#f2f2f2, #ebebeb 50%, #d8d8d8 52%, #cdcdcd);
}

.btn.ok {
  width: 77px;
  border: 1px solid #3c9fdc;
  box-shadow: inset 0 0 0 1px #8fcdf0;
  background: linear-gradient(#eaf3fa, #dceaf5 50%, #bcd8ee 52%, #b4d4ec);
}

.btn.off {
  width: 77px;
  border-color: #adb2b5;
  color: #8a8a8a;
  background: #f0f0f0;
}

.btn.edit {
  width: 91px;
}

.btn.cancel {
  width: 77px;
  margin-left: auto;
}

/* markeringar ovanpå */
.cursor {
  position: absolute;
  left: 757px;
  top: 511px;
}

.ring {
  position: absolute;
  left: 177px;
  top: 20px;
  width: 64px;
  height: 69px;
  box-sizing: border-box;
  border: 2px solid #e00c0c;
  border-radius: 50%;
}
</style>
